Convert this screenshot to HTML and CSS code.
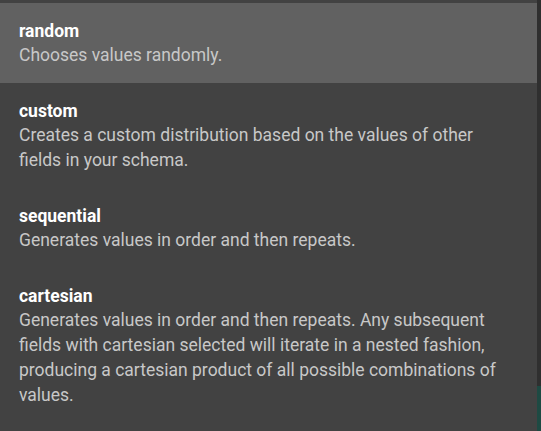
FILE: index.html
```html
<!DOCTYPE html>
<html lang="en">
<head>
<meta charset="utf-8">
<title>Distribution options</title>
<link rel="stylesheet" href="styles.css">
</head>
<body>
<div class="page">
  <ul class="menu">
    <li class="option active">
      <div class="title">random</div>
      <div class="desc">Chooses values randomly.</div>
    </li>
    <li class="option">
      <div class="title">custom</div>
      <div class="desc">Creates a custom distribution based on the values of other fields in your schema.</div>
    </li>
    <li class="option">
      <div class="title">sequential</div>
      <div class="desc">Generates values in order and then repeats.</div>
    </li>
    <li class="option">
      <div class="title">cartesian</div>
      <div class="desc">Generates values in order and then repeats. Any subsequent fields with cartesian selected will iterate in a nested fashion, producing a cartesian product of all possible combinations of values.</div>
    </li>
  </ul>
  <div class="edge">
    <div class="edge-dark"></div>
    <div class="edge-teal"></div>
  </div>
</div>
</body>
</html>
```
FILE: styles.css
```css
html, body {
  margin: 0;
  padding: 0;
  height: 100%;
  background: #424242;
}
body {
  font-family: Roboto, "Liberation Sans", Arial, sans-serif;
}
.page {
  display: flex;
  height: 431px;
}
.menu {
  list-style: none;
  margin: 0;
  padding: 3px 0 0 0;
  flex: 1;
  background: #424242;
}
.option {
  padding: 16px 19px 15px 19px;
}
.option.active {
  background: #616161;
}
.title {
  color: #ffffff;
  font-weight: 700;
  font-size: 17.5px;
  line-height: 24px;
}
.desc {
  color: #c8c8c8;
  font-size: 17.5px;
  line-height: 25px;
  padding-right: 14px;
}
.edge {
  width: 4px;
  display: flex;
  flex-direction: column;
}
.edge-dark {
  flex: 1;
  background: #2f2f2f;
}
.edge-teal {
  height: 45px;
  background: #1e4a43;
}
```
